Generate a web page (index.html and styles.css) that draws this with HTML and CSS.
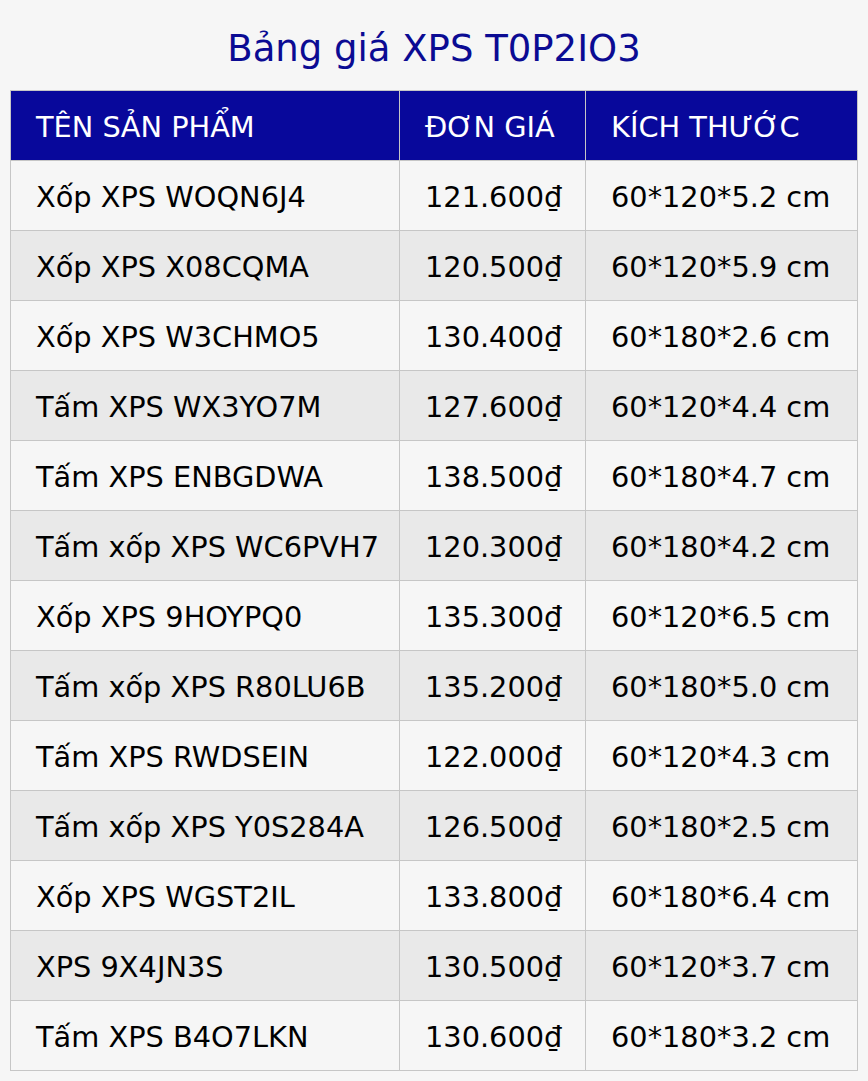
FILE: index.html
```html
<!DOCTYPE html>
<html lang="vi">
<head>
<meta charset="utf-8">
<title>Bảng giá XPS T0P2IO3</title>
<link rel="stylesheet" href="styles.css">
</head>
<body>
<div class="page">
  <h1 class="title">Bảng giá XPS T0P2IO3</h1>
  <table class="price-table">
    <colgroup>
      <col class="c-name">
      <col class="c-price">
      <col class="c-size">
    </colgroup>
    <thead>
      <tr><th>TÊN SẢN PHẨM</th><th>ĐƠN GIÁ</th><th>KÍCH THƯỚC</th></tr>
    </thead>
    <tbody>
      <tr><td>Xốp XPS WOQN6J4</td><td>121.600₫</td><td>60*120*5.2 cm</td></tr>
      <tr><td>Xốp XPS X08CQMA</td><td>120.500₫</td><td>60*120*5.9 cm</td></tr>
      <tr><td>Xốp XPS W3CHMO5</td><td>130.400₫</td><td>60*180*2.6 cm</td></tr>
      <tr><td>Tấm XPS WX3YO7M</td><td>127.600₫</td><td>60*120*4.4 cm</td></tr>
      <tr><td>Tấm XPS ENBGDWA</td><td>138.500₫</td><td>60*180*4.7 cm</td></tr>
      <tr><td>Tấm xốp XPS WC6PVH7</td><td>120.300₫</td><td>60*180*4.2 cm</td></tr>
      <tr><td>Xốp XPS 9HOYPQ0</td><td>135.300₫</td><td>60*120*6.5 cm</td></tr>
      <tr><td>Tấm xốp XPS R80LU6B</td><td>135.200₫</td><td>60*180*5.0 cm</td></tr>
      <tr><td>Tấm XPS RWDSEIN</td><td>122.000₫</td><td>60*120*4.3 cm</td></tr>
      <tr><td>Tấm xốp XPS Y0S284A</td><td>126.500₫</td><td>60*180*2.5 cm</td></tr>
      <tr><td>Xốp XPS WGST2IL</td><td>133.800₫</td><td>60*180*6.4 cm</td></tr>
      <tr><td>XPS 9X4JN3S</td><td>130.500₫</td><td>60*120*3.7 cm</td></tr>
      <tr><td>Tấm XPS B4O7LKN</td><td>130.600₫</td><td>60*180*3.2 cm</td></tr>
    </tbody>
  </table>
</div>
</body>
</html>
```
FILE: styles.css
```css
html, body {
  margin: 0;
  padding: 0;
  background: #f6f6f6;
}
body {
  font-family: "DejaVu Sans", Verdana, sans-serif;
  color: #000;
}
.page {
  padding: 0 10px 10px 10px;
}
.title {
  margin: 0;
  padding: 26px 0 18px 0;
  font-size: 37px;
  line-height: 46px;
  font-weight: normal;
  text-align: center;
  color: #0b0b93;
}
.price-table {
  width: 847px;
  border-collapse: collapse;
  table-layout: fixed;
  font-size: 28.8px;
}
.c-name { width: 389px; }
.c-price { width: 186px; }
.c-size { width: 272px; }
.price-table th,
.price-table td {
  border: 1px solid #c6c6c6;
  padding: 20px 25px 16px 25px;
  line-height: 33px;
  text-align: left;
  white-space: nowrap;
}
.price-table th {
  background: #08089b;
  color: #fff;
  font-weight: normal;
}
.price-table tbody tr:nth-child(odd) td {
  background: #f6f6f6;
}
.price-table tbody tr:nth-child(even) td {
  background: #e9e9e9;
}
```
